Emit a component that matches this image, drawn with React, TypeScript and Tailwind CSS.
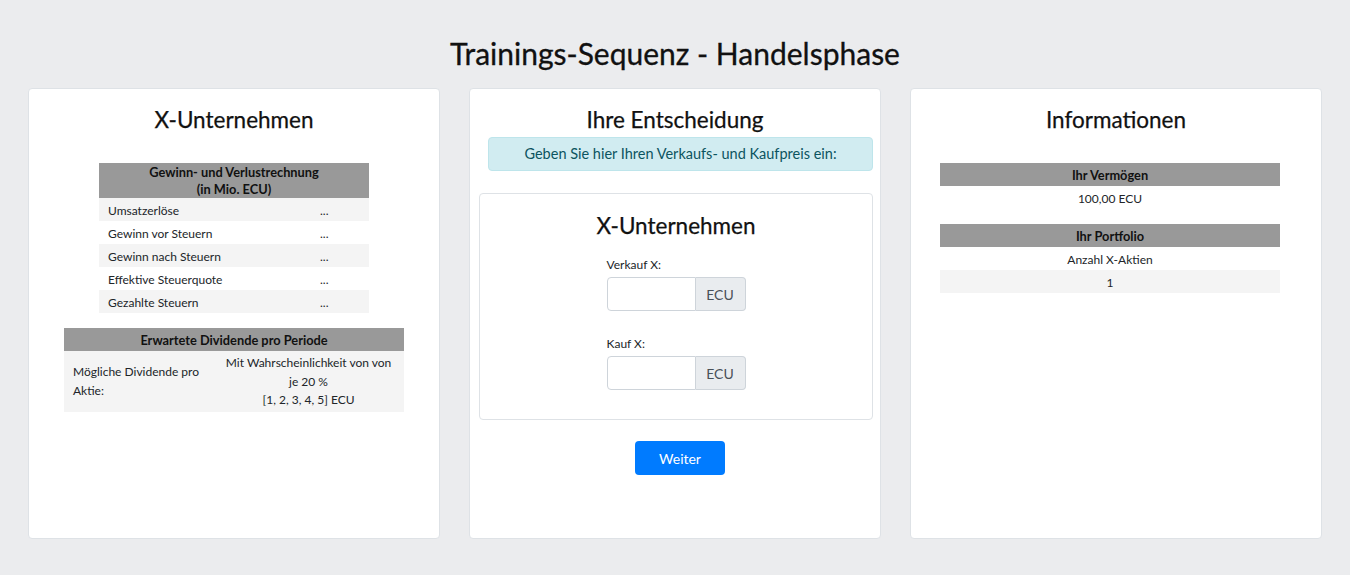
import React from "react";

const font = { fontFamily: '"Segoe UI", Lato, "Noto Sans", sans-serif' };

function Row({ label, value, striped }: { label: string; value: string; striped?: boolean }) {
  return (
    <div className={`grid grid-cols-[212px_1fr] h-[23px] items-center pt-[2px] text-[12px] text-[#212529] ${striped ? "bg-[#f4f4f4]" : "bg-white"}`}>
      <div className="pl-[9px]">{label}</div>
      <div className="pl-[9px]">{value}</div>
    </div>
  );
}

function Header({ children, tall }: { children: React.ReactNode; tall?: boolean }) {
  return (
    <div className={`bg-[#999999] text-[12.8px] font-bold text-[#111] text-center flex flex-col justify-center pt-[1px] leading-[17px] ${tall ? "h-[35px]" : "h-[23px]"}`}>
      {children}
    </div>
  );
}

function InputGroup() {
  return (
    <div className="flex h-[34px] w-[139px]">
      <div className="w-[89px] h-full border border-[#ced4da] rounded-l-[4px] bg-white" />
      <div className="w-[50px] h-full border border-l-0 border-[#ced4da] rounded-r-[4px] bg-[#e9ecef] flex items-center justify-center text-[14px] text-[#495057]">
        ECU
      </div>
    </div>
  );
}

const heading = "text-[22.5px] leading-[29px] text-[#111] [-webkit-text-stroke:0.25px_#111]";

export default function App() {
  return (
    <div className="min-h-[575px] bg-[#ebecee] pt-[33px]" style={font}>
      <h1 className="text-center text-[30px] leading-[40px] text-[#111] font-normal [-webkit-text-stroke:0.3px_#111]">
        Trainings-Sequenz - Handelsphase
      </h1>
      <div className="grid grid-cols-3 gap-[29px] px-[28px] mt-[15px]">
        {/* Left card */}
        <div className="h-[451px] bg-white border border-[#dee2e6] rounded-[4px] flex flex-col items-center">
          <h3 className={`mt-[16px] ${heading}`}>X-Unternehmen</h3>
          <div className="mt-[29px] w-[270px]">
            <Header tall>
              <div>Gewinn- und Verlustrechnung</div>
              <div>(in Mio. ECU)</div>
            </Header>
            <Row label="Umsatzerlöse" value="..." striped />
            <Row label="Gewinn vor Steuern" value="..." />
            <Row label="Gewinn nach Steuern" value="..." striped />
            <Row label="Effektive Steuerquote" value="..." />
            <Row label="Gezahlte Steuern" value="..." striped />
          </div>
          <div className="mt-[15px] w-[340px]">
            <Header>Erwartete Dividende pro Periode</Header>
            <div className="grid grid-cols-[149px_1fr] bg-[#f4f4f4] text-[12px] text-[#212529] leading-[18.5px] pt-[3px] pb-[2px]">
              <div className="pl-[9px] pr-[6px] flex items-center">Mögliche Dividende pro Aktie:</div>
              <div className="text-center">
                <div>Mit Wahrscheinlichkeit von von</div>
                <div>je 20 %</div>
                <div>[1, 2, 3, 4, 5] ECU</div>
              </div>
            </div>
          </div>
        </div>

        {/* Middle card */}
        <div className="h-[451px] bg-white border border-[#dee2e6] rounded-[4px] flex flex-col">
          <h3 className={`mt-[16px] text-center ${heading}`}>Ihre Entscheidung</h3>
          <div className="ml-[18px] mr-[7px] mt-[3px] h-[34px] bg-[#d1ecf1] border border-[#bee5eb] rounded-[4px] flex items-center justify-center text-[14.5px] text-[#0c5460]">
            Geben Sie hier Ihren Verkaufs- und Kaufpreis ein:
          </div>
          <div className="ml-[9px] mr-[7px] mt-[22px] h-[227px] border border-[#dee2e6] rounded-[4px] flex flex-col items-center">
            <h3 className={`mt-[17px] ${heading}`}>X-Unternehmen</h3>
            <div className="mt-[16px] w-[139px]">
              <div className="text-[12px] leading-[18px] text-[#212529]">Verkauf X:</div>
              <div className="mt-[3px]"><InputGroup /></div>
              <div className="mt-[24px] text-[12px] leading-[18px] text-[#212529]">Kauf X:</div>
              <div className="mt-[3px]"><InputGroup /></div>
            </div>
          </div>
          <div className="flex justify-center mt-[21px] pl-[10px]">
            <button className="w-[90px] h-[34px] bg-[#007bff] text-white text-[14px] rounded-[4px]">Weiter</button>
          </div>
        </div>

        {/* Right card */}
        <div className="h-[451px] bg-white border border-[#dee2e6] rounded-[4px] flex flex-col">
          <h3 className={`mt-[16px] text-center ${heading}`}>Informationen</h3>
          <div className="ml-[29px] mt-[29px] w-[340px] text-[12px] text-[#212529] text-center">
            <Header>Ihr Vermögen</Header>
            <div className="h-[23px] flex items-center justify-center pt-[2px]">100,00 ECU</div>
            <div className="mt-[15px]">
              <Header>Ihr Portfolio</Header>
            </div>
            <div className="h-[23px] flex items-center justify-center pt-[2px]">Anzahl X-Aktien</div>
            <div className="h-[23px] flex items-center justify-center pt-[2px] bg-[#f4f4f4]">1</div>
          </div>
        </div>
      </div>
    </div>
  );
}
